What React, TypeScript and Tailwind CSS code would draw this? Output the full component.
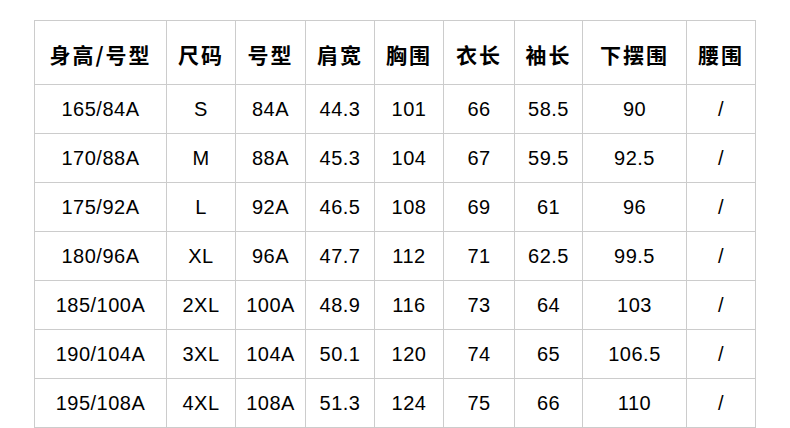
const headers = ['身高/号型', '尺码', '号型', '肩宽', '胸围', '衣长', '袖长', '下摆围', '腰围'];
const widths = ['w-[132px]', 'w-[69px]', 'w-[70px]', 'w-[69px]', 'w-[69px]', 'w-[71px]', 'w-[68px]', 'w-[104px]', 'w-[69px]'];

const rows = [
  ['165/84A', 'S', '84A', '44.3', '101', '66', '58.5', '90', '/'],
  ['170/88A', 'M', '88A', '45.3', '104', '67', '59.5', '92.5', '/'],
  ['175/92A', 'L', '92A', '46.5', '108', '69', '61', '96', '/'],
  ['180/96A', 'XL', '96A', '47.7', '112', '71', '62.5', '99.5', '/'],
  ['185/100A', '2XL', '100A', '48.9', '116', '73', '64', '103', '/'],
  ['190/104A', '3XL', '104A', '50.1', '120', '74', '65', '106.5', '/'],
  ['195/108A', '4XL', '108A', '51.3', '124', '75', '66', '110', '/'],
];

export default function App() {
  return (
    <div className="w-[790px] h-[428px] bg-white pl-[34px] pt-[20px] overflow-hidden">
      <table className="border-collapse table-fixed w-[722px] text-black">
        <thead>
          <tr className="h-[64px]">
            {headers.map((h, i) => (
              <th
                key={h}
                className={`${widths[i]} border border-[#cccccc] p-0 pt-[4px] text-center align-middle font-bold text-[21px] tracking-[2px] font-['Noto_Sans_CJK_SC',sans-serif]`}
              >
                {h}
              </th>
            ))}
          </tr>
        </thead>
        <tbody>
          {rows.map((r) => (
            <tr key={r[0]} className="h-[49px]">
              {r.map((c, j) => (
                <td
                  key={j}
                  className="border border-[#cccccc] p-0 text-center align-middle text-[20px] font-['Liberation_Sans',Arial,sans-serif] tracking-[0.5px]"
                >
                  {c}
                </td>
              ))}
            </tr>
          ))}
        </tbody>
      </table>
    </div>
  );
}
